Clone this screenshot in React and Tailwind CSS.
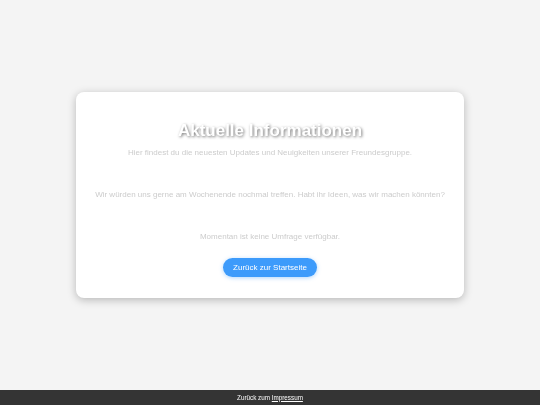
export default function App() {
  return (
    <div className="min-h-screen bg-[#f4f4f4] flex flex-col font-['Liberation_Sans',Arial,sans-serif] blur-[0.4px]">
      <main className="h-[390px] flex items-center justify-center">
        <section className="w-[388px] h-[206px] bg-white rounded-lg shadow-[0_2px_8px_rgba(0,0,0,0.25)] flex flex-col items-center pt-[29px] text-center">
          <h1 className="text-[17px] leading-[20px] font-bold text-white [text-shadow:1px_1px_3px_rgba(0,0,0,0.55)]">
            Aktuelle Informationen
          </h1>
          <p className="mt-[7px] text-[8px] leading-[10px] text-[#cccccc]">
            Hier findest du die neuesten Updates und Neuigkeiten unserer Freundesgruppe.
          </p>
          <p className="mt-[32px] text-[8px] leading-[10px] text-[#cccccc]">
            Wir würden uns gerne am Wochenende nochmal treffen. Habt ihr Ideen, was wir machen könnten?
          </p>
          <p className="mt-[32px] text-[8px] leading-[10px] text-[#cccccc]">
            Momentan ist keine Umfrage verfügbar.
          </p>
          <button className="mt-[16px] w-[94px] h-[19px] rounded-full bg-[#3d9bfb] text-white text-[8px] shadow-[0_1px_4px_rgba(61,155,251,0.4)]">
            Zurück zur Startseite
          </button>
        </section>
      </main>
      <footer className="h-[15px] bg-[#343434] flex items-center justify-center text-[6.3px] text-white">
        Zurück zum&nbsp;<span className="underline">Impressum</span>
      </footer>
    </div>
  );
}
